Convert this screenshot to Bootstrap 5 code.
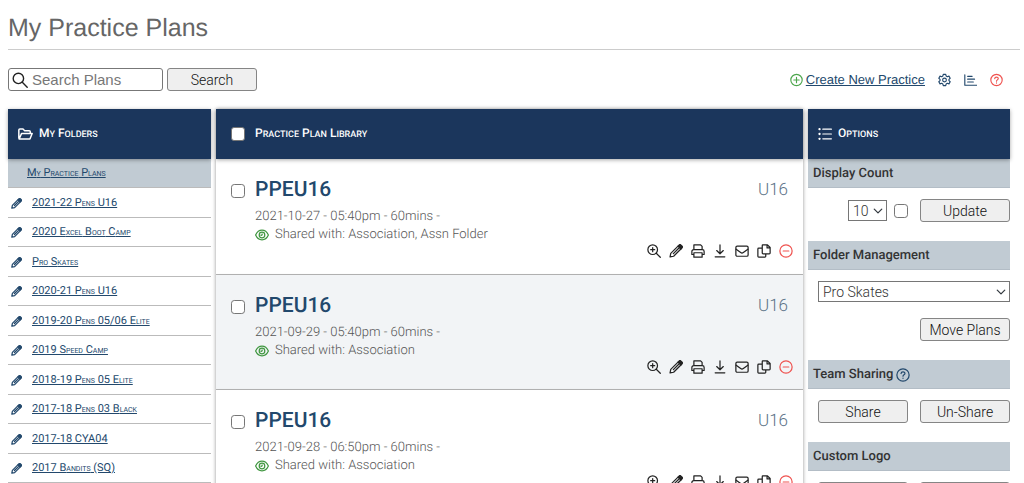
<!DOCTYPE html>
<html lang="en">
<head>
<meta charset="utf-8">
<meta name="viewport" content="width=device-width, initial-scale=1">
<title>My Practice Plans</title>
<link href="https://cdn.jsdelivr.net/npm/bootstrap@5.3.0/dist/css/bootstrap.min.css" rel="stylesheet">
<style>
:root { --navy: #1b365c; --ink: #22486c; --steel: #c1cbd3; }
body { font-family: Roboto, sans-serif; font-size: 13px; line-height: 18px; color: #3c3f42; background: #fff; text-rendering: geometricPrecision; }
.page-head { font-family: "Liberation Sans", Arial, sans-serif; margin: 0 4px 18px 8px; padding: 13px 0 6px; border-bottom: 1px solid #ccc; }
.page-head h1 { font-size: 25px; line-height: 30px; font-weight: 400; color: #666; }
.toolbar-row { margin: 0 14px 18px 8px; }
.board { display: grid; grid-template-columns: 203fr 587fr 202fr; gap: 5px; margin: 0 14px 0 8px; align-items: start; }
a { color: var(--ink); text-underline-offset: 1px; }
svg.ico { width: 14px; height: 14px; flex: none; display: block; fill: none; stroke: currentColor; stroke-width: 1.4; stroke-linecap: round; stroke-linejoin: round; }
svg.wide { width: 15px; }
svg.large { width: 16px; height: 16px; }

.search-box { width: 155px; height: 23px; border: 1px solid #777; border-radius: 3px; padding: 0 3px; gap: 4px; color: #222; }
.search-box input { font: 15px/18px "Liberation Sans", Arial, sans-serif; border: 0; outline: 0; padding: 0; min-width: 0; width: 100%; color: #333; }
.search-box input::placeholder { color: #777; opacity: 1; }
.btn-plain { width: 90px; height: 23px; padding: 0; font-size: 14px; line-height: 18px; font-weight: 300; color: #111; background: #efefef; border: 1px solid #858585; border-radius: 3px; white-space: nowrap; }
.btn-plain:hover { background: #e2e2e2; border-color: #666; }
.quick-nav { gap: 3px; padding-right: 7px; }
.create-link { font: 13px/18px "Liberation Sans", Arial, sans-serif; }
.quick-icons { gap: 13px; margin-left: 10px; }
.quick-nav svg.ico { width: 13px; height: 14px; }
.text-add { color: #4da64d; }
.text-stop { color: #ef5350; }

.panel-head { height: 50px; background: var(--navy); color: #fff; font-size: 12px; line-height: 18px; font-weight: 500; margin: 0; padding: 0 10px; gap: 6px; box-shadow: 0 1px 4px rgba(0,0,0,.35); position: relative; }
/* small capitals: full-size initials, reduced capitals after them */
.sc { font-size: 9px; text-transform: uppercase; }
.folders { display: grid; grid-auto-rows: 29px 30px; margin: 0; padding: 0; list-style: none; font-size: 11px; }
.folders .sc { font-size: 7px; }
.folders li { display: flex; align-items: center; gap: 10px; padding: 1px 3px 0; border-bottom: 1px solid #bbb; }
.folders li.current { background: var(--steel); padding-left: 19px; }
.folders svg.ico { width: 11px; height: 11px; color: var(--ink); stroke-width: 1.8; }

.library { box-shadow: 0 0 4px rgba(0,0,0,.3); }
.library .panel-head { padding-left: 15px; gap: 10px; }
.plans { display: grid; grid-auto-rows: 116px 115px; }
.plan { padding: 19px 10px 0 15px; border-bottom: 1px solid #b5b5b5; gap: 10px; background: #fff; position: relative; box-shadow: 0 1px 3px rgba(0,0,0,.15); }
.plan:nth-child(even) { background: #f2f4f6; }
.plan h2 { font-size: 21px; line-height: 24px; font-weight: 500; color: var(--ink); margin: 0 0 6px; }
.meta { font-weight: 300; color: #555; gap: 6px; }
.group-tag { font-size: 17px; line-height: 24px; font-weight: 300; color: #5d7488; margin-right: 5px; }
.plan-tools { gap: 8px; color: #222; }
.plan-tools button { border: 0; background: none; padding: 0; color: inherit; }
.plan-tools .text-stop { color: #ef5350; }
.eye-mark { color: #3f963f; }

.tick { appearance: auto; -webkit-appearance: none; width: 14px; height: 14px; flex: none; margin: 0; border: 1px solid #767676; border-radius: 3px; background-color: #fff; }
.plan .tick { margin-top: 6px; }

.section-title { height: 29px; margin: 0; padding: 1px 5px 0; background-color: var(--steel); border-bottom: 1px solid #b3bdc6; font-size: 13px; line-height: 18px; font-weight: 500; color: #333; gap: 3px; }
.section-title svg { color: var(--ink); }
.section-body { padding: 11px 0 19px 10px; }
.count-row { gap: 7px; }
.count-row .btn-plain { margin-left: 5px; }
.pick { height: 21px; border: 1px solid #767676; border-radius: 0; font-size: 14px; line-height: 18px; font-weight: 300; color: #333; padding: 0 16px 0 4px; background-size: 10px 10px; background-position: right 3px center; }
.pick-count { width: 39px; }
</style>
</head>
<body>
<svg class="d-none" aria-hidden="true">
  <symbol id="i-search" viewBox="0 0 16 16"><circle cx="6.4" cy="6.4" r="5.2"/><path d="M10.3 10.3 15.2 15.2"/></symbol>
  <symbol id="i-plus" viewBox="0 0 16 16"><circle cx="8" cy="8" r="7"/><path d="M8 4.7v6.6M4.7 8h6.6"/></symbol>
  <symbol id="i-minus" viewBox="0 0 16 16"><circle cx="8" cy="8" r="7"/><path d="M4.8 8h6.4"/></symbol>
  <symbol id="i-help" viewBox="0 0 16 16"><circle cx="8" cy="8" r="7"/><path d="M5.8 6.3C5.9 4 10.2 3.9 10.2 6.3c0 1.6-2.2 1.5-2.2 3.1M8 11.6v.2"/></symbol>
  <symbol id="i-gear" viewBox="0 0 16 16"><path d="M6.5 1h3l.5 2 1.5.9 2-.7 1.5 2.6L13.5 7.2v1.6l1.5 1.4-1.5 2.6-2-.7-1.5.9-.5 2h-3L6 13l-1.5-.9-2 .7L1 10.2l1.5-1.4V7.2L1 5.8l1.5-2.6 2 .7L6 3z"/><circle cx="8" cy="8" r="2.3"/></symbol>
  <symbol id="i-chart" viewBox="0 0 16 16"><path d="M1 1.5V14.5H15.5M4.500 3.500H10M4.500 7H13M4.500 10.500H11.500"/></symbol>
  <symbol id="i-folder" viewBox="0 0 18 16"><path stroke-width="1.8" d="M1 13V3.200C1 2.500 1.500 2 2.200 2H6l2 2h5.500c.7 0 1.200.5 1.200 1.200V7M1.300 14 4.200 7.500H17L14.300 14z"/></symbol>
  <symbol id="i-list" viewBox="0 0 16 16"><path d="M5.500 2.500H15.300M5.500 8H15.300M5.500 13.500H15.300"/><path stroke-width="2.6" d="M1.700 2.500h.1M1.700 8h.1M1.700 13.500h.1"/></symbol>
  <symbol id="i-pencil" viewBox="0 0 16 16"><path d="M1.200 14.800 2 10.700 10.300 2.400 13.600 5.700 5.300 14zM5 11 10.800 5.200"/><path fill="currentColor" d="M10.300 2.400 11.700 1c.5-.5 1.200-.5 1.700 0l1.600 1.600c.5.500.5 1.200 0 1.700l-1.400 1.400z"/></symbol>
  <symbol id="i-zoom" viewBox="0 0 16 16"><circle cx="6.500" cy="6.500" r="5.500"/><path d="M10.600 10.600 15.200 15.200M6.500 4.200v4.600M4.200 6.500h4.600"/></symbol>
  <symbol id="i-print" viewBox="0 0 16 16"><path d="M3.300 6.500V1h7.700l1.700 1.700v3.800M3.300 12H1V8.500c0-1.100.9-2 2-2h10c1.100 0 2 .9 2 2V12h-2.300M3.300 10h9.400v5H3.300z"/></symbol>
  <symbol id="i-down" viewBox="0 0 16 16"><path d="M8 1v10M4.200 7.500 8 11.200l3.800-3.700M2.500 14.700h11"/></symbol>
  <symbol id="i-mail" viewBox="0 0 16 16"><rect x="1" y="2.500" width="14" height="11.500" rx="1.500"/><path d="M1.300 6 6.500 9.800c1 .7 2 .7 3 0L14.700 6"/></symbol>
  <symbol id="i-copy" viewBox="0 0 16 16"><path d="M6.500 1H12l3 3v6.300c0 .6-.4 1-1 1H7c-.6 0-1-.4-1-1V2c0-.6.4-1 .5-1zM11.500 1v3.500H15M6 4.700H2c-.6 0-1 .4-1 1V14c0 .6.400 1 1 1h7c.6 0 1-.4 1-1v-2.700"/></symbol>
  <symbol id="i-eye" viewBox="0 0 16 14"><path d="M.7 7C2.300 3.500 4.900 1.500 8 1.500s5.700 2 7.300 5.500c-1.600 3.500-4.200 5.500-7.300 5.500S2.300 10.500.7 7z"/><circle cx="8" cy="7" r="3.200"/><path d="M6.700 7.200c1 .4 1.800-.4 1.400-1.400"/></symbol>
</svg>

<header class="page-head"><h1 class="m-0">My Practice Plans</h1></header>

<div class="toolbar-row d-flex align-items-center">
  <form class="d-flex gap-1" role="search">
    <label class="search-box d-flex align-items-center" aria-label="Search plans">
      <svg class="ico large"><use href="#i-search"/></svg>
      <input type="text" placeholder="Search Plans">
    </label>
    <button type="button" class="btn btn-plain">Search</button>
  </form>
  <nav class="quick-nav ms-auto d-flex align-items-center" aria-label="Plan tools">
    <svg class="ico text-add"><use href="#i-plus"/></svg>
    <a class="create-link" href="#">Create New Practice</a>
    <div class="quick-icons d-flex">
      <a href="#" aria-label="Settings"><svg class="ico"><use href="#i-gear"/></svg></a>
      <a href="#" aria-label="Statistics"><svg class="ico"><use href="#i-chart"/></svg></a>
      <a class="text-stop" href="#" aria-label="Help"><svg class="ico"><use href="#i-help"/></svg></a>
    </div>
  </nav>
</div>

<main class="board">
  <nav aria-label="Folders">
    <h2 class="panel-head d-flex align-items-center"><svg class="ico wide"><use href="#i-folder"/></svg><span>M<span class="sc">y</span> F<span class="sc">olders</span></span></h2>
    <ul class="folders">
      <li class="current"><a href="#">M<span class="sc">y</span> P<span class="sc">ractice</span> P<span class="sc">lans</span></a></li>
      <li><svg class="ico"><use href="#i-pencil"/></svg><a href="#">2021-22 P<span class="sc">ens</span> U16</a></li>
      <li><svg class="ico"><use href="#i-pencil"/></svg><a href="#">2020 E<span class="sc">xcel</span> B<span class="sc">oot</span> C<span class="sc">amp</span></a></li>
      <li><svg class="ico"><use href="#i-pencil"/></svg><a href="#">P<span class="sc">ro</span> S<span class="sc">kates</span></a></li>
      <li><svg class="ico"><use href="#i-pencil"/></svg><a href="#">2020-21 P<span class="sc">ens</span> U16</a></li>
      <li><svg class="ico"><use href="#i-pencil"/></svg><a href="#">2019-20 P<span class="sc">ens</span> 05/06 E<span class="sc">lite</span></a></li>
      <li><svg class="ico"><use href="#i-pencil"/></svg><a href="#">2019 S<span class="sc">peed</span> C<span class="sc">amp</span></a></li>
      <li><svg class="ico"><use href="#i-pencil"/></svg><a href="#">2018-19 P<span class="sc">ens</span> 05 E<span class="sc">lite</span></a></li>
      <li><svg class="ico"><use href="#i-pencil"/></svg><a href="#">2017-18 P<span class="sc">ens</span> 03 B<span class="sc">lack</span></a></li>
      <li><svg class="ico"><use href="#i-pencil"/></svg><a href="#">2017-18 CYA04</a></li>
      <li><svg class="ico"><use href="#i-pencil"/></svg><a href="#">2017 B<span class="sc">andits</span> (SQ)</a></li>
    </ul>
  </nav>

  <section class="library">
    <div class="panel-head d-flex align-items-center z-1">
      <input class="form-check-input tick" type="checkbox" id="all"><label for="all">P<span class="sc">ractice</span> P<span class="sc">lan</span> L<span class="sc">ibrary</span></label>
    </div>
    <div class="plans">
      <article class="plan d-flex">
        <input class="form-check-input tick" type="checkbox" aria-label="Select plan of 2021-10-27">
        <div class="flex-grow-1">
          <div class="d-flex justify-content-between"><h2>PPEU16</h2><span class="group-tag">U16</span></div>
          <div class="meta">2021-10-27 - 05:40pm - 60mins -</div>
          <div class="meta d-flex align-items-center"><svg class="ico eye-mark"><use href="#i-eye"/></svg>Shared with: Association, Assn Folder</div>
          <div class="plan-tools d-flex justify-content-end">
            <button type="button" aria-label="View"><svg class="ico"><use href="#i-zoom"/></svg></button>
            <button type="button" aria-label="Edit"><svg class="ico"><use href="#i-pencil"/></svg></button>
            <button type="button" aria-label="Print"><svg class="ico"><use href="#i-print"/></svg></button>
            <button type="button" aria-label="Download"><svg class="ico"><use href="#i-down"/></svg></button>
            <button type="button" aria-label="Email"><svg class="ico"><use href="#i-mail"/></svg></button>
            <button type="button" aria-label="Copy"><svg class="ico"><use href="#i-copy"/></svg></button>
            <button type="button" aria-label="Remove" class="text-stop"><svg class="ico"><use href="#i-minus"/></svg></button>
          </div>
        </div>
      </article>
      <article class="plan d-flex">
        <input class="form-check-input tick" type="checkbox" aria-label="Select plan of 2021-09-29">
        <div class="flex-grow-1">
          <div class="d-flex justify-content-between"><h2>PPEU16</h2><span class="group-tag">U16</span></div>
          <div class="meta">2021-09-29 - 05:40pm - 60mins -</div>
          <div class="meta d-flex align-items-center"><svg class="ico eye-mark"><use href="#i-eye"/></svg>Shared with: Association</div>
          <div class="plan-tools d-flex justify-content-end">
            <button type="button" aria-label="View"><svg class="ico"><use href="#i-zoom"/></svg></button>
            <button type="button" aria-label="Edit"><svg class="ico"><use href="#i-pencil"/></svg></button>
            <button type="button" aria-label="Print"><svg class="ico"><use href="#i-print"/></svg></button>
            <button type="button" aria-label="Download"><svg class="ico"><use href="#i-down"/></svg></button>
            <button type="button" aria-label="Email"><svg class="ico"><use href="#i-mail"/></svg></button>
            <button type="button" aria-label="Copy"><svg class="ico"><use href="#i-copy"/></svg></button>
            <button type="button" aria-label="Remove" class="text-stop"><svg class="ico"><use href="#i-minus"/></svg></button>
          </div>
        </div>
      </article>
      <article class="plan d-flex">
        <input class="form-check-input tick" type="checkbox" aria-label="Select plan of 2021-09-28">
        <div class="flex-grow-1">
          <div class="d-flex justify-content-between"><h2>PPEU16</h2><span class="group-tag">U16</span></div>
          <div class="meta">2021-09-28 - 06:50pm - 60mins -</div>
          <div class="meta d-flex align-items-center"><svg class="ico eye-mark"><use href="#i-eye"/></svg>Shared with: Association</div>
          <div class="plan-tools d-flex justify-content-end">
            <button type="button" aria-label="View"><svg class="ico"><use href="#i-zoom"/></svg></button>
            <button type="button" aria-label="Edit"><svg class="ico"><use href="#i-pencil"/></svg></button>
            <button type="button" aria-label="Print"><svg class="ico"><use href="#i-print"/></svg></button>
            <button type="button" aria-label="Download"><svg class="ico"><use href="#i-down"/></svg></button>
            <button type="button" aria-label="Email"><svg class="ico"><use href="#i-mail"/></svg></button>
            <button type="button" aria-label="Copy"><svg class="ico"><use href="#i-copy"/></svg></button>
            <button type="button" aria-label="Remove" class="text-stop"><svg class="ico"><use href="#i-minus"/></svg></button>
          </div>
        </div>
      </article>
    </div>
  </section>

  <aside>
    <h2 class="panel-head d-flex align-items-center"><svg class="ico"><use href="#i-list"/></svg><span>O<span class="sc">ptions</span></span></h2>
    <h3 class="section-title d-flex align-items-center">Display Count</h3>
    <div class="section-body count-row d-flex justify-content-end align-items-center">
      <select class="form-select pick pick-count" aria-label="Display count"><option>10</option></select>
      <input class="form-check-input tick" type="checkbox" aria-label="Keep display count">
      <button type="button" class="btn btn-plain">Update</button>
    </div>
    <h3 class="section-title d-flex align-items-center">Folder Management</h3>
    <div class="section-body">
      <select class="form-select pick w-100" aria-label="Folder"><option>Pro Skates</option></select>
      <div class="text-end pt-3"><button type="button" class="btn btn-plain">Move Plans</button></div>
    </div>
    <h3 class="section-title d-flex align-items-center">Team Sharing <svg class="ico"><use href="#i-help"/></svg></h3>
    <div class="section-body d-flex justify-content-between">
      <button type="button" class="btn btn-plain">Share</button>
      <button type="button" class="btn btn-plain">Un-Share</button>
    </div>
    <h3 class="section-title d-flex align-items-center">Custom Logo</h3>
    <div class="section-body d-flex justify-content-between">
      <button type="button" class="btn btn-plain" aria-label="Upload logo"></button>
      <button type="button" class="btn btn-plain" aria-label="Remove logo"></button>
    </div>
  </aside>
</main>
<script src="https://cdn.jsdelivr.net/npm/bootstrap@5.3.0/dist/js/bootstrap.bundle.min.js"></script>
</body>
</html>
